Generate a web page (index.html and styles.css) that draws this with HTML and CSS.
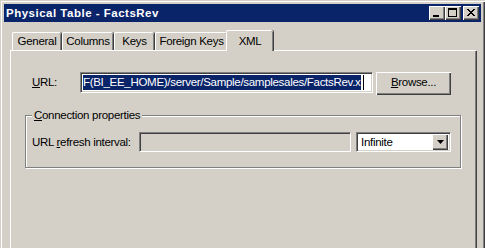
FILE: index.html
```html
<!DOCTYPE html>
<html>
<head>
<meta charset="utf-8">
<link rel="stylesheet" href="styles.css">
</head>
<body>
<div class="window">
  <div class="titlebar">
    <span class="title">Physical Table - FactsRev</span>
    <div class="tbuttons">
      <span class="tbtn"><svg width="14" height="12" viewBox="0 0 14 12"><rect x="3" y="8" width="6" height="2" fill="#000"/></svg></span>
      <span class="tbtn"><svg width="14" height="12" viewBox="0 0 14 12"><rect x="2.5" y="1.5" width="8" height="8" fill="none" stroke="#000"/><rect x="2" y="1" width="9" height="2" fill="#000"/></svg></span>
      <span class="tbtn close"><svg width="14" height="12" viewBox="0 0 14 12"><path d="M3 2 L10 9 M4 2 L11 9 M10 2 L3 9 M11 2 L4 9" stroke="#000" stroke-width="1"/></svg></span>
    </div>
  </div>
  <div class="body">
    <div class="tabs">
      <div class="tab t-general">General</div>
      <div class="tab t-columns">Columns</div>
      <div class="tab t-keys">Keys</div>
      <div class="tab t-fk">Foreign Keys</div>
      <div class="tab active t-xml">XML</div>
    </div>
    <div class="panel">
      <div class="row1">
        <span class="lbl lbl-url"><u>U</u>RL:</span>
        <div class="field url"><span class="sel">F(BI_EE_HOME)/server/Sample/samplesales/FactsRev.x</span><span class="caret"></span></div>
        <div class="button"><u>B</u>rowse...</div>
      </div>
      <div class="group">
        <div class="legend"><u>C</u>onnection properties</div>
        <div class="row2">
          <span class="lbl lbl-refresh">URL <u>r</u>efresh interval:</span>
          <div class="field disabled"></div>
          <div class="combo">
            <span class="combo-text">Infinite</span>
            <span class="combo-btn"><svg width="7" height="4" viewBox="0 0 7 4"><path d="M0 0 H7 L3.5 4 Z" fill="#000"/></svg></span>
          </div>
        </div>
      </div>
    </div>
  </div>
</div>
</body>
</html>
```

FILE: styles.css
```css
* { box-sizing: border-box; }
html, body { margin: 0; padding: 0; }
body {
  background: #d4d0c8;
  font-family: "Liberation Sans", Arial, sans-serif;
  font-size: 11.5px;
  letter-spacing: -0.3px;
  color: #000;
  width: 485px;
  height: 248px;
  overflow: hidden;
}
.window {
  width: 485px;
  height: 270px;
  padding: 4px;
  background: #d4d0c8;
  box-shadow: inset 1px 1px 0 #d4d0c8, inset 2px 2px 0 #fff, inset -1px -1px 0 #404040, inset -2px -2px 0 #808080;
}
.titlebar {
  height: 18px;
  background: #0a246a;
  display: flex;
  align-items: center;
  justify-content: space-between;
  padding: 0 2px 0 2px;
}
.title {
  color: #fff;
  font-weight: bold;
  font-size: 11.5px;
  letter-spacing: 0.5px;
}
.tbuttons { display: flex; }
.tbtn {
  width: 16px;
  height: 14px;
  background: #d4d0c8;
  box-shadow: inset 1px 1px 0 #fff, inset -1px -1px 0 #404040, inset -2px -2px 0 #808080;
  display: flex;
  align-items: center;
  justify-content: center;
}
.tbtn svg { display: block; }
.tbtn.close { margin-left: 2px; }
.body {
  padding: 8px 5px 0 6px;
}
.tabs {
  display: flex;
  align-items: flex-end;
  height: 20px;
  padding-left: 2px;
  position: relative;
  z-index: 1;
}
.tab {
  height: 18px;
  padding-top: 2px;
  text-align: center;
  border-top: 1px solid #fff;
  border-left: 1px solid #fff;
  border-top-left-radius: 2px;
  border-top-right-radius: 2px;
  box-shadow: inset -1px 0 0 #808080, 1px 0 0 #404040;
  margin-right: 1px;
}
.t-general { width: 49px; }
.t-columns { width: 51px; }
.t-keys { width: 40px; }
.t-fk { width: 72px; }
.tab.active {
  height: 21px;
  width: 47px;
  margin-left: -2px;
  padding-top: 4px;
  margin-bottom: -1px;
  background: #d4d0c8;
}
.panel {
  height: 210px;
  border-top: 1px solid #fff;
  border-left: 1px solid #fff;
  box-shadow: inset -1px -1px 0 #808080, 1px 1px 0 #404040;
  padding: 21px 0 0 14px;
}
.row1 {
  display: flex;
  align-items: flex-start;
}
.lbl-url {
  width: 55px;
  padding-left: 7px;
  line-height: 21px;
}
.field {
  height: 21px;
  border-top: 1px solid #808080;
  border-left: 1px solid #808080;
  border-right: 1px solid #fff;
  border-bottom: 1px solid #fff;
  box-shadow: inset 1px 1px 0 #404040, inset -1px -1px 0 #d4d0c8;
  background: #fff;
}
.field.url {
  width: 293px;
  padding: 2px 0 0 2px;
  display: flex;
  align-items: flex-start;
  white-space: nowrap;
  overflow: hidden;
}
.sel {
  background: #0a246a;
  color: #fff;
  line-height: 15px;
  height: 15px;
  display: block;
  padding-right: 1px;
}
.caret {
  display: block;
  width: 1px;
  height: 15px;
  background: #000;
  margin-left: 2px;
}
.button {
  width: 75px;
  height: 23px;
  margin-left: 3px;
  text-align: center;
  line-height: 21px;
  box-shadow: inset 1px 1px 0 #fff, inset -1px -1px 0 #404040, inset -2px -2px 0 #808080;
}
.group {
  margin: 20px 0 0 0;
  width: 436px;
  height: 53px;
  padding: 0 0 0 6px;
  border: 1px solid #808080;
  box-shadow: inset 1px 1px 0 #fff, 1px 1px 0 #fff;
}
.legend {
  display: table;
  margin-top: -8px;
  padding: 0 2px;
  line-height: 14px;
  background: #d4d0c8;
}
.row2 {
  display: flex;
  align-items: center;
  margin-top: 10px;
}
.lbl-refresh { width: 107px; }
.field.disabled {
  width: 212px;
  height: 20px;
  background: #d4d0c8;
}
.combo {
  width: 95px;
  height: 20px;
  margin-left: 5px;
  background: #fff;
  border-top: 1px solid #808080;
  border-left: 1px solid #808080;
  border-right: 1px solid #fff;
  border-bottom: 1px solid #fff;
  box-shadow: inset 1px 1px 0 #404040, inset -1px -1px 0 #d4d0c8;
  display: flex;
  align-items: center;
  justify-content: space-between;
  padding: 1px 2px 1px 4px;
}
.combo-btn {
  width: 16px;
  height: 16px;
  background: #d4d0c8;
  box-shadow: inset 1px 1px 0 #fff, inset -1px -1px 0 #404040, inset -2px -2px 0 #808080;
  display: flex;
  align-items: center;
  justify-content: center;
}
.combo-btn svg { display: block; }
```
